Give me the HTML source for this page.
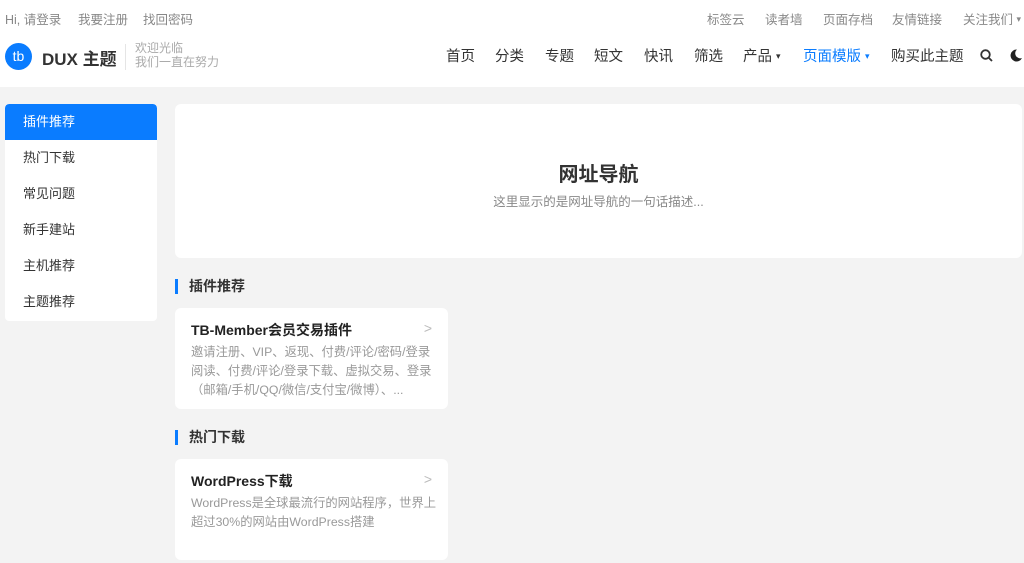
<!DOCTYPE html>
<html><head><meta charset="utf-8"><style>
*{margin:0;padding:0;box-sizing:border-box}
body{width:1024px;height:563px;overflow:hidden;background:#f3f3f3;font-family:"Liberation Sans","Noto Sans CJK SC",sans-serif;position:relative}
.hdr{position:absolute;left:0;top:0;width:1024px;height:87px;background:#fff}
.a{position:absolute;white-space:nowrap}
.top{font-size:12.5px;color:#888;top:9px}
.nav{font-size:14.5px;color:#333;top:45px}
.side{position:absolute;left:5px;top:104px;width:152px;height:217px;background:#fff;border-radius:4px;overflow:hidden}
.side div{height:36px;line-height:36px;padding-left:18px;font-size:13px;color:#333}
.side .on{background:#0a7cff;color:#fff;border-radius:4px 4px 0 0}
.card{position:absolute;background:#fff;border-radius:6px}
.h{position:absolute;left:175px;font-size:14px;font-weight:bold;color:#333;padding-left:11px;border-left:3px solid #0a7cff;line-height:15px}
.ct{position:absolute;left:16px;top:12px;font-size:14px;font-weight:bold;color:#222}
.cd{position:absolute;left:16px;top:35px;width:246px;height:57px;overflow:hidden;font-size:12.3px;line-height:19px;color:#999;white-space:normal}
.arr{position:absolute;right:16px;top:12px;color:#bbb;font-size:14px}
.car{font-size:9px;vertical-align:2px}
</style></head><body>
<div class="hdr"></div>
<div class="a top" style="left:5px">Hi, 请登录</div>
<div class="a top" style="left:78px">我要注册</div>
<div class="a top" style="left:143px">找回密码</div>
<div class="a top" style="left:707px">标签云</div>
<div class="a top" style="left:765px">读者墙</div>
<div class="a top" style="left:823px">页面存档</div>
<div class="a top" style="left:892px">友情链接</div>
<div class="a top" style="left:963px">关注我们 <span class="car">▾</span></div>
<div class="a" style="left:5px;top:43px;width:27px;height:27px;border-radius:50%;background:#0a7cff;color:#fff;font-size:14px;text-align:center;line-height:26px">tb</div>
<div class="a" style="left:42px;top:45px;font-size:17px;font-weight:bold;color:#333">DUX 主题</div>
<div class="a" style="left:125px;top:44px;width:1px;height:26px;background:#e5e5e5"></div>
<div class="a" style="left:135px;top:41px;font-size:12px;line-height:14px;color:#aaa">欢迎光临<br>我们一直在努力</div>
<div class="a nav" style="left:446px">首页</div>
<div class="a nav" style="left:495px">分类</div>
<div class="a nav" style="left:545px">专题</div>
<div class="a nav" style="left:594px">短文</div>
<div class="a nav" style="left:644px">快讯</div>
<div class="a nav" style="left:694px">筛选</div>
<div class="a nav" style="left:743px">产品 <span class="car">▾</span></div>
<div class="a nav" style="left:803px;color:#0a7cff">页面模版 <span class="car">▾</span></div>
<div class="a nav" style="left:891px">购买此主题</div>
<svg class="a" style="left:980px;top:49px" width="13" height="13" viewBox="0 0 13 13"><circle cx="5.5" cy="5.5" r="4.3" fill="none" stroke="#333" stroke-width="1.8"/><path d="M8.6 8.6L12 12" stroke="#333" stroke-width="1.8"/></svg>
<svg class="a" style="left:1010px;top:49px" width="12" height="13" viewBox="0 0 12 13"><path d="M7 0.5A6 6 0 1 0 12 9 5 5 0 0 1 7 0.5z" fill="#222"/></svg>
<div class="side"><div class="on">插件推荐</div><div>热门下载</div><div>常见问题</div><div>新手建站</div><div>主机推荐</div><div>主题推荐</div></div>
<div class="card" style="left:175px;top:104px;width:847px;height:154px">
<div class="a" style="left:0;width:847px;text-align:center;top:54px;font-size:20px;font-weight:bold;color:#333">网址导航</div>
<div class="a" style="left:0;width:847px;text-align:center;top:87px;font-size:12.5px;color:#888">这里显示的是网址导航的一句话描述...</div>
</div>
<div class="h" style="top:279px">插件推荐</div>
<div class="card" style="left:175px;top:308px;width:273px;height:101px">
<div class="ct">TB-Member会员交易插件</div><div class="arr">&gt;</div>
<div class="cd">邀请注册、VIP、返现、付费/评论/密码/登录阅读、付费/评论/登录下载、虚拟交易、登录（邮箱/手机/QQ/微信/支付宝/微博）、...</div>
</div>
<div class="h" style="top:430px">热门下载</div>
<div class="card" style="left:175px;top:459px;width:273px;height:101px">
<div class="ct">WordPress下载</div><div class="arr">&gt;</div>
<div class="cd">WordPress是全球最流行的网站程序，世界上超过30%的网站由WordPress搭建</div>
</div>
</body></html>
